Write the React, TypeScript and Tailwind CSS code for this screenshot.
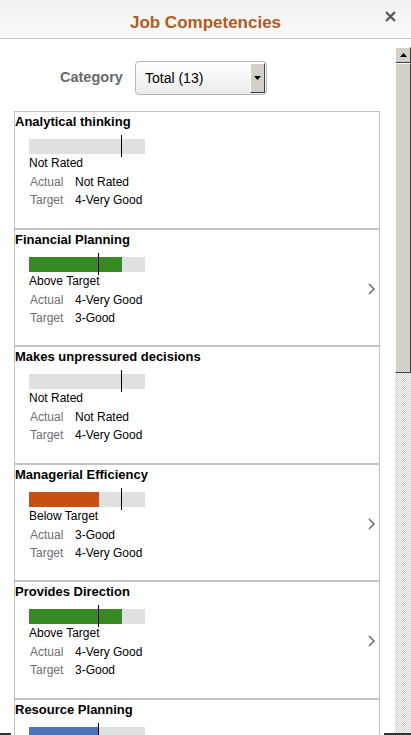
import React from "react";

type Item = {
  name: string;
  status: string;
  actual: string;
  target: string;
  fill: number; // 0-5
  mark: number; // 0-5
  color: string;
  more: boolean;
};

const items: Item[] = [
  { name: "Analytical thinking", status: "Not Rated", actual: "Not Rated", target: "4-Very Good", fill: 0, mark: 4, color: "", more: false },
  { name: "Financial Planning", status: "Above Target", actual: "4-Very Good", target: "3-Good", fill: 4, mark: 3, color: "bg-[#378a23]", more: true },
  { name: "Makes unpressured decisions", status: "Not Rated", actual: "Not Rated", target: "4-Very Good", fill: 0, mark: 4, color: "", more: false },
  { name: "Managerial Efficiency", status: "Below Target", actual: "3-Good", target: "4-Very Good", fill: 3, mark: 4, color: "bg-[#c85014]", more: true },
  { name: "Provides Direction", status: "Above Target", actual: "4-Very Good", target: "3-Good", fill: 4, mark: 3, color: "bg-[#378a23]", more: true },
  { name: "Resource Planning", status: "Meets Target", actual: "3-Good", target: "3-Good", fill: 3, mark: 3, color: "bg-[#4f74be]", more: true },
];

function Card({ item }: { item: Item }) {
  return (
    <div className="relative h-[117.5px] shrink-0 border border-[#c2c2c2] bg-white">
      <div className="pt-[2px] text-[13px] font-bold leading-[16px] text-black">{item.name}</div>
      {/* BAR */}
      <div className="relative ml-[14px] mt-[9px] h-[15px] w-[116px] bg-[#e0e0e0]">
        {item.fill > 0 && (
          <div className={`h-full ${item.color}`} style={{ width: `${(item.fill / 5) * 116}px` }} />
        )}
        <div
          className="absolute top-[-4px] bottom-[-3px] w-px bg-black"
          style={{ left: `${(item.mark / 5) * 116 - 1}px` }}
        />
      </div>
      <div className="ml-[14px] mt-[1px] text-[12px] leading-[16px] text-black">{item.status}</div>
      <div className="ml-[15px] mt-[3px] flex text-[12px] leading-[16px]">
        <span className="w-[45px] text-[#707070]">Actual</span>
        <span className="text-black">{item.actual}</span>
      </div>
      <div className="ml-[15px] mt-[2px] flex text-[12px] leading-[16px]">
        <span className="w-[45px] text-[#707070]">Target</span>
        <span className="text-black">{item.target}</span>
      </div>
      {item.more && (
        <svg className="absolute right-[4px] top-[53px]" width="7" height="12" viewBox="0 0 7 12">
          <polyline points="1,1 6,6 1,11" fill="none" stroke="#6a6a6a" strokeWidth="1.5" />
        </svg>
      )}
    </div>
  );
}

export default function App() {
  return (
    <div
      className="relative flex h-[735px] w-[411px] flex-col overflow-hidden bg-white"
      style={{ fontFamily: '"Liberation Sans", Arial, sans-serif' }}
    >
      {/* HEADER */}
      <div className="relative h-[39px] shrink-0 border-b border-[#c6c6c6] bg-gradient-to-b from-[#f1f1f1] to-[#fafafa]">
        <div className="pt-[13px] text-center text-[17px] font-bold leading-[20px] text-[#b15c1c]">
          Job Competencies
        </div>
        <button className="absolute right-[15px] top-[11px] p-0">
          <svg width="11" height="11" viewBox="0 0 11 11">
            <path d="M1 1 L10 10 M10 1 L1 10" stroke="#555" strokeWidth="2.2" />
          </svg>
        </button>
      </div>

      {/* BODY */}
      <div className="flex min-h-0 flex-1">
        <div className="w-[395px] shrink-0">
          {/* CATEGORY */}
          <div className="flex items-center pl-[60px] pt-[22px]">
            <span className="w-[64px] text-[14.5px] font-bold text-[#696969]">Category</span>
            <div className="ml-[11px] flex h-[34px] w-[132px] items-center rounded-[4px] border border-[#b9b9b9] bg-gradient-to-b from-white to-[#ececec] pl-[9px] pr-[1px]">
              <span className="flex-1 text-[14px] text-black">Total (13)</span>
              <div className="flex h-[30px] w-[15px] items-center justify-center border-t border-l border-t-white border-l-white border-r-[1.5px] border-b-[1.5px] border-r-[#404040] border-b-[#404040] bg-[#d4d0c8]">
                <svg width="7" height="4" viewBox="0 0 7 4">
                  <polygon points="0,0 7,0 3.5,4" fill="#000" />
                </svg>
              </div>
            </div>
          </div>

          {/* LIST */}
          <div className="ml-[14px] mt-[16px] flex w-[366px] flex-col">
            {items.map((item) => (
              <Card key={item.name} item={item} />
            ))}
          </div>
        </div>

        {/* SCROLLBAR */}
        <div className="flex w-[16px] shrink-0 flex-col pt-[8px]">
          <div className="flex h-[16px] w-[16px] items-center justify-center border-t border-l border-t-white border-l-white border-r border-b border-r-[#404040] border-b-[#404040] bg-[#d4d0c8]">
            <svg width="7" height="4" viewBox="0 0 7 4">
              <polygon points="3.5,0 7,4 0,4" fill="#000" />
            </svg>
          </div>
          <div className="h-[310px] w-[16px] border-t border-l border-t-white border-l-white border-r border-b border-r-[#404040] border-b-[#404040] bg-[#d4d0c8]" />
          <div className="flex-1 bg-[image:repeating-conic-gradient(#d4d0c8_0_25%,#ffffff_0_50%)] bg-[length:2px_2px]" />
        </div>
      </div>

      <div className="absolute bottom-0 left-0 h-[2px] w-[11px] bg-[#333]" />
      <div className="absolute bottom-0 right-0 h-[2px] w-[27px] bg-[#333]" />
    </div>
  );
}
